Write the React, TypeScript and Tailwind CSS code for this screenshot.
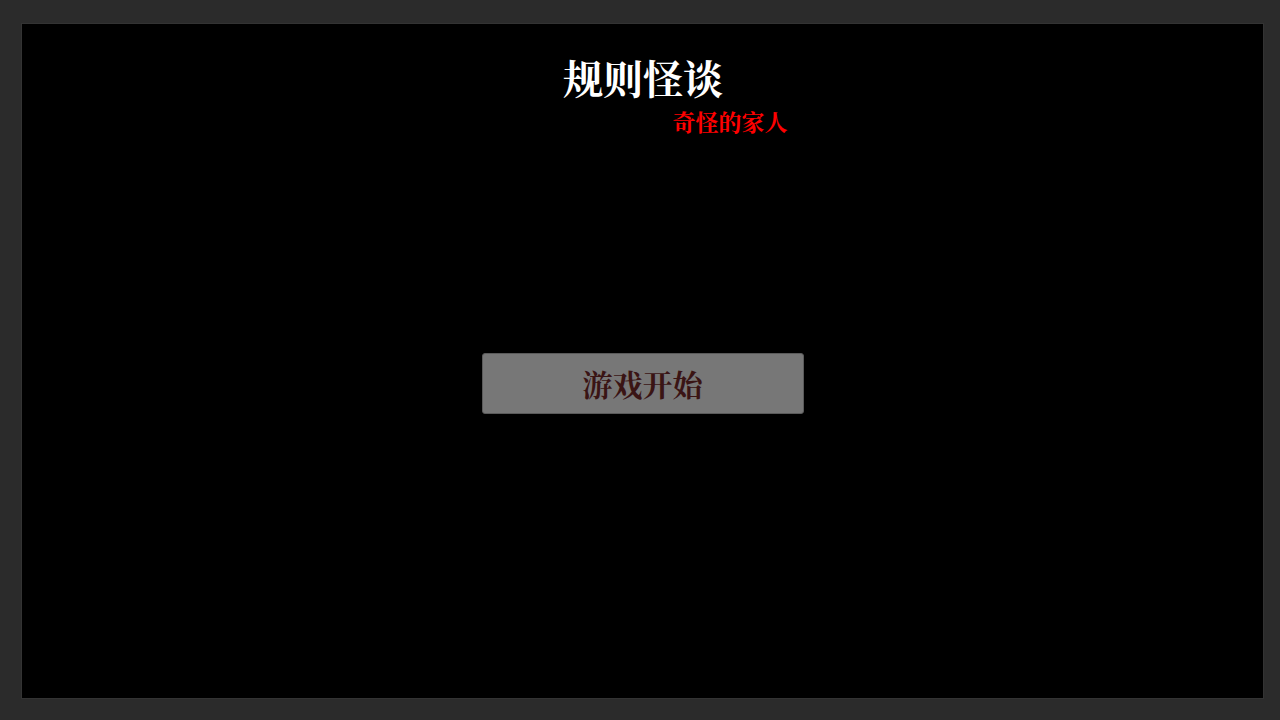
export default function App() {
  const serif = {
    fontFamily:
      '"Noto Serif CJK SC", "Noto Serif SC", "Source Han Serif SC", "Noto Sans CJK SC", serif',
  };
  return (
    <div className="w-[1280px] h-[720px] bg-[#2b2b2b] pl-[21px] pr-[16px] pt-[23px] pb-[21px]">
      <div
        className="relative w-full h-full bg-black border border-[#333333] flex flex-col items-center"
        style={serif}
      >
        <h1 className="mt-[29px] text-[40px] leading-[48px] font-bold text-white ml-[1px]">
          规则怪谈
        </h1>
        <p className="mt-[6px] ml-[175px] text-[23px] leading-[30px] font-bold text-[#ff0000]">
          奇怪的家人
        </p>
        <button className="mt-[216px] w-[322px] h-[61px] bg-[#777777] border border-[#5a5a5a] rounded-[3px] text-[30px] font-bold text-[#3a1414]">
          游戏开始
        </button>
      </div>
    </div>
  );
}
